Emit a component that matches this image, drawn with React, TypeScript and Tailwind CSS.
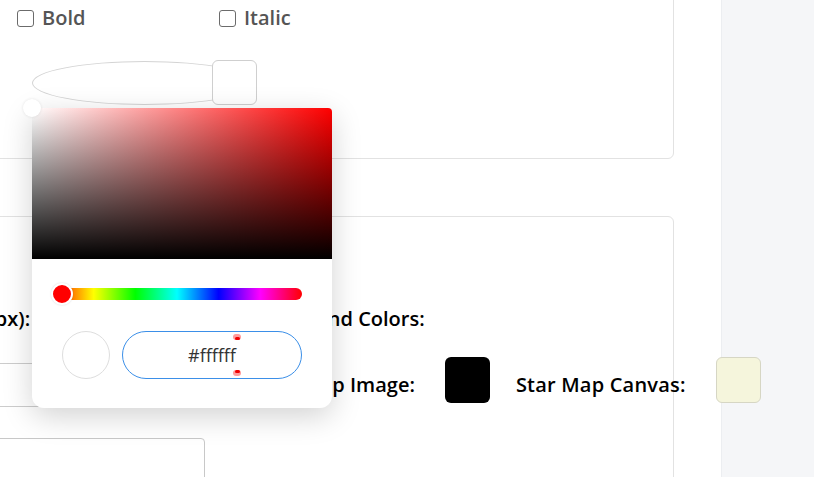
import React from "react";

function Checkbox({ label }: { label: string }) {
  return (
    <label className="w-[202px] flex items-center gap-[8px]">
      <span className="w-[17px] h-[17px] rounded-[3px] border-[1.5px] border-[#6b6b6b] bg-white shrink-0" />
      <span className="text-[20px] leading-[28px] font-semibold text-[#555]">{label}</span>
    </label>
  );
}

function Dot({ top, flip }: { top: string; flip?: boolean }) {
  return (
    <span className={`absolute left-[110px] ${top} w-[8px] h-[6px] rounded-full bg-[#ff9c9c] flex justify-center ${flip ? "items-start" : "items-end"}`}>
      <span className="w-[5px] h-[3px] rounded-full bg-[#f00000]" />
    </span>
  );
}

export default function App() {
  return (
    <div className="relative w-[814px] h-[477px] overflow-hidden bg-[#f5f6f8] flex font-['Open_Sans',sans-serif]">
      <div className="relative z-10 w-[722px] shrink-0 bg-white flex flex-col border-r border-[#eceef1]">
        {/* Card 1 */}
        <div className="-mt-[10px] -ml-[10px] w-[684px] h-[169px] shrink-0 border border-[#e2e2e2] rounded-[6px] pt-[13px] pl-[26px]">
          <div className="flex h-[28px] items-center">
            <Checkbox label="Bold" />
            <Checkbox label="Italic" />
          </div>
          <div className="relative mt-[29px] ml-[15px] w-[225px] h-[44px]">
            <div className="w-[225px] h-[44px] rounded-[50%] border border-[#d4d4d4]" />
            <div className="absolute left-[180px] -top-[1px] w-[45px] h-[45px] rounded-[6px] border border-[#cfcfcf] bg-white" />
          </div>
        </div>

        {/* Card 2 */}
        <div className="mt-[57px] -ml-[200px] w-[874px] h-[300px] shrink-0 border border-[#e2e2e2] rounded-[6px] pt-[88px] flex">
          <div className="ml-[89px] w-[320px] flex flex-col">
            <div className="ml-[7px] text-[20px] leading-[28px] font-semibold text-black whitespace-nowrap">Font Size (px):</div>
            <div className="mt-[30px] w-[320px] h-[45px] border border-[#cccccc] rounded-[4px]" />
            <div className="mt-[31px] w-[315px] h-[80px] border border-[#c8c8c8] rounded-[4px]" />
          </div>
          <div className="ml-[27px] flex flex-col">
            <div className="text-[20px] leading-[28px] font-semibold text-black whitespace-nowrap">Background Colors:</div>
            <div className="mt-[24px] ml-[21px] flex items-center h-[46px]">
              <span className="pt-[10px] text-[20px] leading-[28px] font-semibold text-black whitespace-nowrap">Star Map Image:</span>
              <span className="ml-[30px] w-[45px] h-[46px] rounded-[6px] bg-black shrink-0" />
              <span className="ml-[26px] pt-[10px] text-[20px] leading-[28px] font-semibold text-black whitespace-nowrap tracking-[0.2px]">Star Map Canvas:</span>
              <span className="ml-[30px] w-[45px] h-[46px] rounded-[6px] bg-[#f5f5dc] border border-[#d6d6c4] shrink-0" />
            </div>
          </div>
        </div>
      </div>
      <div className="flex-1" />

      {/* Color picker popover */}
      <div className="absolute z-20 left-[32px] top-[108px] w-[300px] h-[300px] bg-white rounded-t-[4px] rounded-b-[12px] shadow-[0_8px_30px_rgba(0,0,0,0.18)] flex flex-col">
        <div className="relative h-[151px] rounded-t-[4px] bg-[linear-gradient(to_right,#ffffff,#ff0000)]">
          <div className="absolute inset-0 rounded-t-[4px] bg-[linear-gradient(to_top,#000000,rgba(0,0,0,0))]" />
          <span className="absolute -left-[9px] -top-[9px] w-[18px] h-[18px] rounded-full bg-white shadow-[0_0_3px_rgba(0,0,0,0.1)]" />
        </div>
        <div className="pl-[20px] pr-[30px] pt-[29px]">
          <div className="relative h-[12px] rounded-full bg-[linear-gradient(to_right,#ff0000,#ffff00,#00ff00,#00ffff,#0000ff,#ff00ff,#ff0000)]">
            <span className="absolute -left-[1px] -top-[5px] w-[22px] h-[22px] rounded-full bg-[#ff0000] border-2 border-white shadow-[0_0_2px_rgba(0,0,0,0.15)]" />
          </div>
          <div className="mt-[31px] flex items-center">
            <span className="ml-[10px] w-[48px] h-[48px] rounded-full border-[1.5px] border-[#dedede] bg-white shrink-0" />
            <div className="relative ml-[12px] w-[180px] h-[48px] shrink-0 rounded-full border border-[#3b8fe8] flex items-center justify-center text-[18px] text-[#333]">
              #ffffff
              <Dot top="top-[2px]" />
              <Dot top="top-[38px]" flip />
            </div>
          </div>
        </div>
      </div>
    </div>
  );
}
